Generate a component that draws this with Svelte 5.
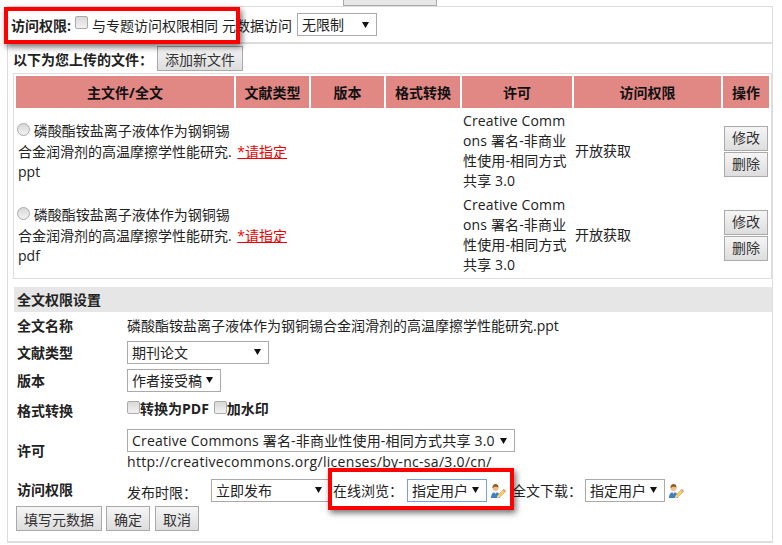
<script>
    const files = [
        { name: '磷酸酯铵盐离子液体作为钢铜锡', rest: '合金润滑剂的高温摩擦学性能研究.', ext: 'ppt' },
        { name: '磷酸酯铵盐离子液体作为钢铜锡', rest: '合金润滑剂的高温摩擦学性能研究.', ext: 'pdf' }
    ];
    const headers = ['主文件/全文', '文献类型', '版本', '格式转换', '许可', '访问权限', '操作'];
</script>

<div class="page">
    <div class="top-btn"></div>
    <div class="box">
        <div class="access">
            <b>访问权限:</b>
            <input type="checkbox" class="chk first" />
            <span class="same">与专题访问权限相同</span>
            <span class="meta">元数据访问</span>
            <select class="sel s-meta"><option>无限制</option></select>
        </div>
        <div class="uploaded">
            <b>以下为您上传的文件：</b>
            <button class="add">添加新文件</button>
        </div>
        <table>
            <colgroup>
                <col style="width:218px" /><col style="width:73px" /><col style="width:73px" /><col style="width:74px" /><col style="width:110px" /><col style="width:147px" /><col style="width:46px" />
            </colgroup>
            <thead>
                <tr>
                    {#each headers as h}<th>{h}</th>{/each}
                </tr>
            </thead>
            <tbody>
                {#each files as f}
                    <tr>
                        <td class="main">
                            <input type="radio" class="radio" /> {f.name}<br />
                            {f.rest} <a href="#top">*请指定</a><br />
                            {f.ext}
                        </td>
                        <td></td>
                        <td></td>
                        <td></td>
                        <td class="lic">Creative Commons 署名-非商业性使用-相同方式共享 3.0</td>
                        <td class="open">开放获取</td>
                        <td class="ops">
                            <button>修改</button>
                            <button>删除</button>
                        </td>
                    </tr>
                {/each}
            </tbody>
        </table>

        <div class="settings">
            <div class="title">全文权限设置</div>
            <div class="row r-name"><b>全文名称</b><span>磷酸酯铵盐离子液体作为钢铜锡合金润滑剂的高温摩擦学性能研究.ppt</span></div>
            <div class="row r-type"><b>文献类型</b><select class="sel s-type"><option>期刊论文</option></select></div>
            <div class="row r-ver"><b>版本</b><select class="sel s-ver"><option>作者接受稿</option></select></div>
            <div class="row r-fmt">
                <b>格式转换</b>
                <div class="checks">
                    <input type="checkbox" class="chk" /><b>转换为PDF</b>
                    <input type="checkbox" class="chk second" /><b>加水印</b>
                </div>
            </div>
            <div class="row r-lic">
                <b>许可</b>
                <div>
                    <select class="sel s-lic"><option>Creative Commons 署名-非商业性使用-相同方式共享 3.0</option></select>
                    <div class="url">http://creativecommons.org/licenses/by-nc-sa/3.0/cn/</div>
                </div>
            </div>
            <div class="row r-acc">
                <b>访问权限</b>
                <div class="acc">
                    <span class="l1">发布时限：</span>
                    <select class="sel s-pub"><option>立即发布</option></select>
                    <span class="l2">在线浏览：</span>
                    <select class="sel s-user focus"><option>指定用户</option></select>
                    <svg class="who" viewBox="0 0 16 16" width="16" height="16">
                        <path d="M1 15c0-4 2-6 4.500-6S10 11 10 15z" fill="#3f7fc4" />
                        <path d="M4 9l1.500 2L7 9z" fill="#e8eef6" />
                        <circle cx="5.500" cy="5" r="3" fill="#eebd8e" />
                        <path d="M2.500 5c0-3 1.500-4 3-4s3.200 1 3 3.500C7.500 3.500 5 3.500 4 4 3.500 4.500 3 5 2.500 5z" fill="#8a5a22" />
                        <path d="M7 15l1-3 5.500-5.500 2 2L10 14z" fill="#f3cc62" stroke="#c79a3a" stroke-width=".5" />
                        <path d="M13 7l1-1 2 2-1 1z" fill="#e58aa0" />
                        <path d="M7 15l1-3 2 2z" fill="#f4dcc0" />
                    </svg>
                    <span class="l3">全文下载：</span>
                    <select class="sel s-user"><option>指定用户</option></select>
                    <svg class="who" viewBox="0 0 16 16" width="16" height="16">
                        <path d="M1 15c0-4 2-6 4.500-6S10 11 10 15z" fill="#3f7fc4" />
                        <path d="M4 9l1.500 2L7 9z" fill="#e8eef6" />
                        <circle cx="5.500" cy="5" r="3" fill="#eebd8e" />
                        <path d="M2.500 5c0-3 1.500-4 3-4s3.200 1 3 3.500C7.500 3.500 5 3.500 4 4 3.500 4.500 3 5 2.500 5z" fill="#8a5a22" />
                        <path d="M7 15l1-3 5.500-5.500 2 2L10 14z" fill="#f3cc62" stroke="#c79a3a" stroke-width=".5" />
                        <path d="M13 7l1-1 2 2-1 1z" fill="#e58aa0" />
                        <path d="M7 15l1-3 2 2z" fill="#f4dcc0" />
                    </svg>
                </div>
            </div>
            <div class="actions">
                <button>填写元数据</button>
                <button>确定</button>
                <button class="cancel">取消</button>
            </div>
        </div>
    </div>
    <div class="mark m1"></div>
    <div class="mark m2"></div>
</div>

<style>
    :global(body) {
        background: #fff;
    }

    .page {
        position: relative;
        width: 782px;
        height: 545px;
        overflow: hidden;
        font-family: "Open Sans", "Noto Sans CJK SC", sans-serif;
        font-size: 14px;
        color: #222;
    }

    .top-btn {
        width: 92px;
        height: 5px;
        margin-left: 343px;
        border: 1px solid #aaa;
        border-top: 0;
        background: #e6e6e6;
    }

    .box {
        margin-left: 7px;
        width: 764px;
        height: 534px;
        border: 1px solid #ddd;
        border-width: 1px 1px 2px 1px;
    }

    button {
        font: inherit;
        color: #333;
        padding: 0;
        border: 1px solid #aaa;
        background: linear-gradient(#f5f5f5, #ddd);
    }

    .sel {
        appearance: none;
        font: inherit;
        color: #222;
        height: 23px;
        padding: 0 16px 0 4px;
        border: 1px solid #aaa;
        border-radius: 0;
        background: #fff url("data:image/svg+xml,%3Csvg xmlns='http://www.w3.org/2000/svg' width='7' height='6'%3E%3Cpath d='M0 0h7L3.500 6z' fill='%23111'/%3E%3C/svg%3E") no-repeat right 7px center;
    }

    .chk,
    .radio {
        appearance: none;
        width: 13px;
        height: 13px;
        margin: 0;
        border: 1px solid #aaa;
        border-radius: 2px;
        background: linear-gradient(#d8d8d8, #f2f2f2);
    }

    .radio {
        border-radius: 50%;
        margin: 0 0 0 -1px;
    }

    .access {
        display: flex;
        align-items: center;
        height: 35px;
        padding-left: 3px;
        border-bottom: 2px solid #ddd;
    }

    .first {
        margin: 0 0 4px 4px;
    }

    .same {
        margin-left: 4px;
    }

    .meta {
        margin-left: 4px;
    }

    .s-meta {
        width: 80px;
        margin-left: 5px;
    }

    .uploaded {
        display: flex;
        align-items: center;
        height: 29px;
        padding-left: 5px;
    }

    .add {
        width: 86px;
        height: 25px;
        margin-left: 4px;
    }

    table {
        table-layout: fixed;
        width: 757px;
        margin-left: 5px;
        border: 1px solid #ddd;
        border-spacing: 2px;
    }

    th {
        height: 32px;
        padding: 0;
        background: #e18885;
        color: #111;
    }

    td {
        padding: 0 2px;
        height: 82px;
        line-height: 20px;
    }

    .main {
        padding: 2px 0 0 2px;
        height: 80px;
        line-height: 20.500px;
        white-space: nowrap;
    }

    a {
        color: #e00;
        margin-left: 2px;
    }

    .lic {
        word-break: break-all;
        padding-left: 1px;
        letter-spacing: 0.150px;
    }

    .open {
        padding-left: 1px;
    }

    .ops {
        padding: 0;
    }

    .ops button {
        display: block;
        width: 44px;
        height: 25px;
        margin: 1px 0 1px 1px;
    }

    .settings {
        margin: 8px 0 0 6px;
    }

    .title {
        height: 25px;
        line-height: 25px;
        padding-left: 3px;
        font-weight: 700;
        background: #e6e6e6;
    }

    .row {
        display: grid;
        grid-template-columns: 110px 1fr;
        align-items: center;
        padding-left: 3px;
        height: 28px;
    }

    .r-name {
        height: 26px;
    }

    .r-lic > b,
    .r-acc > b {
        margin-top: -2px;
    }

    .r-fmt {
        height: 31px;
    }

    .r-lic {
        height: 51px;
    }

    .r-acc {
        height: 28px;
    }

    .s-type {
        width: 142px;
    }

    .s-ver {
        width: 94px;
    }

    .checks {
        display: flex;
        align-items: center;
        margin-top: -4px;
    }

    .second {
        margin-left: 5px;
    }

    .s-lic {
        width: 388px;
        height: 23px;
        display: block;
        letter-spacing: 0.180px;
    }

    .url {
        line-height: 20px;
        letter-spacing: 0.300px;
    }

    .acc {
        display: flex;
        align-items: center;
    }

    .l1 {
        width: 84px;
        margin-top: 4px;
    }

    .s-pub {
        width: 119px;
        margin-right: 3px;
    }

    .l2 {
        width: 74px;
    }

    .s-user {
        width: 80px;
    }

    .focus {
        border-color: #7a9fe0;
    }

    .who {
        margin: 2px 6px 0 3px;
        flex: none;
    }

    .l3 {
        width: 73px;
    }

    .actions {
        display: flex;
        gap: 4px;
        padding: 2px 0 0 2px;
    }

    .actions button {
        height: 25px;
        padding: 0 7px;
    }

    .actions .cancel {
        margin-left: 1px;
    }

    .mark {
        position: absolute;
        border: 4px solid #f00;
        box-shadow: 2px 3px 6px rgba(0, 0, 0, 0.55);
        box-sizing: border-box;
    }

    .m1 {
        left: 4px;
        top: 7px;
        width: 236px;
        height: 37px;
    }

    .m2 {
        left: 328px;
        top: 468px;
        width: 186px;
        height: 42px;
    }
</style>
